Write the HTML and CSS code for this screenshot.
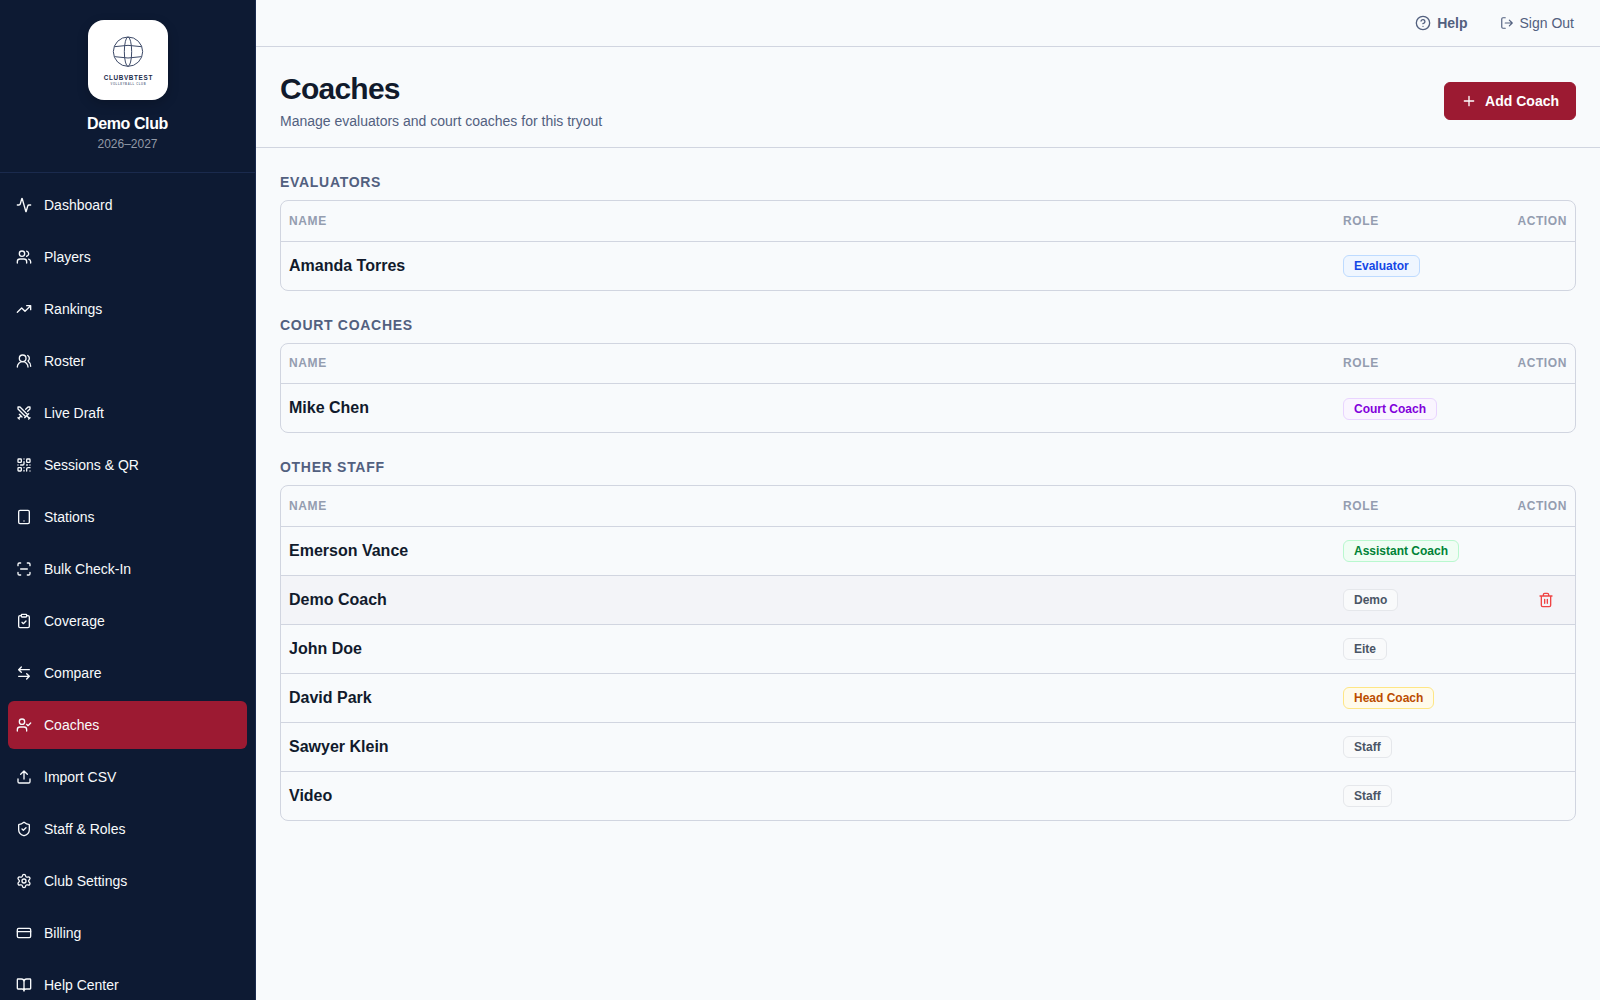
FILE: index.html
```
<!DOCTYPE html>
<html lang="en">
<head>
    <meta charset="UTF-8">
    <meta name="viewport" content="width=device-width, initial-scale=1.0">
    <title>Coaches - Demo Club</title>
    <link rel="stylesheet" href="styles.css">
</head>
<body>
    <aside class="sidebar">
        <div class="club">
            <svg class="club-logo" viewBox="0 0 240 240" role="img" aria-label="Club logo">
                <g fill="none" stroke="#3d4a68" stroke-width="3">
                    <circle cx="120" cy="95" r="44"/>
                    <ellipse cx="120" cy="95" rx="11" ry="44"/>
                    <path d="M80 80Q120 72 160 80M80 110Q120 118 160 110"/>
                </g>
                <text class="logo-name" x="121" y="180">CLUBVBTEST</text>
                <text class="logo-sub" x="121" y="195">VOLLEYBALL CLUB</text>
            </svg>
            <div class="club-name">Demo Club</div>
            <div class="club-season">2026–2027</div>
        </div>
        <nav class="nav">
            <a href="#"><svg class="icon" viewBox="0 0 24 24"><path d="M22 12h-2.48a2 2 0 0 0-1.93 1.46l-2.35 8.36a.25.25 0 0 1-.48 0L9.24 2.18a.25.25 0 0 0-.48 0l-2.35 8.36A2 2 0 0 1 4.49 12H2"/></svg>Dashboard</a>
            <a href="#"><svg class="icon" viewBox="0 0 24 24"><path d="M16 21v-2a4 4 0 0 0-4-4H6a4 4 0 0 0-4 4v2M16 3.128a4 4 0 0 1 0 7.744M22 21v-2a4 4 0 0 0-3-3.87"/><circle cx="9" cy="7" r="4"/></svg>Players</a>
            <a href="#"><svg class="icon" viewBox="0 0 24 24"><path d="M16 7h6v6M22 7l-8.500 8.500-5-5L2 17"/></svg>Rankings</a>
            <a href="#"><svg class="icon" viewBox="0 0 24 24"><path d="M18 21a8 8 0 0 0-16 0"/><circle cx="10" cy="8" r="5"/><path d="M22 20c0-3.370-2-6.500-4-8a5 5 0 0 0-.45-8.300"/></svg>Roster</a>
            <a href="#"><svg class="icon" viewBox="0 0 24 24"><path d="M14.500 17.500 3 6V3h3l11.500 11.500M13 19l6-6M16 16l4 4M19 21l2-2M14.500 6.500 18 3h3v3l-3.500 3.500M5 14l4 4M7 17l-3 3M3 19l2 2"/></svg>Live Draft</a>
            <a href="#"><svg class="icon" viewBox="0 0 24 24"><rect x="3" y="3" width="5" height="5" rx="1"/><rect x="16" y="3" width="5" height="5" rx="1"/><rect x="3" y="16" width="5" height="5" rx="1"/><path d="M21 16h-3a2 2 0 0 0-2 2v3M21 21v.01M12 7v3a2 2 0 0 1-2 2H7M3 12h.01M12 3h.01M12 16v.01M16 12h1M21 12v.01M12 21v-1"/></svg>Sessions &amp; QR</a>
            <a href="#"><svg class="icon" viewBox="0 0 24 24"><rect x="4" y="2" width="16" height="20" rx="2"/><path d="M12 18h.01"/></svg>Stations</a>
            <a href="#"><svg class="icon" viewBox="0 0 24 24"><path d="M3 7V5a2 2 0 0 1 2-2h2M17 3h2a2 2 0 0 1 2 2v2M21 17v2a2 2 0 0 1-2 2h-2M7 21H5a2 2 0 0 1-2-2v-2M7 12h10"/></svg>Bulk Check-In</a>
            <a href="#"><svg class="icon" viewBox="0 0 24 24"><rect x="8" y="2" width="8" height="4" rx="1"/><path d="M16 4h2a2 2 0 0 1 2 2v14a2 2 0 0 1-2 2H6a2 2 0 0 1-2-2V6a2 2 0 0 1 2-2h2M9 14l2 2 4-4"/></svg>Coverage</a>
            <a href="#"><svg class="icon" viewBox="0 0 24 24"><path d="M8 3 4 7l4 4M4 7h16M16 21l4-4-4-4M20 17H4"/></svg>Compare</a>
            <a href="#" class="active" aria-current="page"><svg class="icon" viewBox="0 0 24 24"><path d="M16 11l2 2 4-4M16 21v-2a4 4 0 0 0-4-4H6a4 4 0 0 0-4 4v2"/><circle cx="9" cy="7" r="4"/></svg>Coaches</a>
            <a href="#"><svg class="icon" viewBox="0 0 24 24"><path d="M12 3v12M17 8l-5-5-5 5M21 15v4a2 2 0 0 1-2 2H5a2 2 0 0 1-2-2v-4"/></svg>Import CSV</a>
            <a href="#"><svg class="icon" viewBox="0 0 24 24"><path d="M20 13c0 5-3.500 7.500-7.660 8.950a1 1 0 0 1-.67-.01C7.500 20.500 4 18 4 13V6a1 1 0 0 1 1-1c2 0 4.500-1.200 6.240-2.720a1.170 1.170 0 0 1 1.520 0C14.510 3.810 17 5 19 5a1 1 0 0 1 1 1zM9 12l2 2 4-4"/></svg>Staff &amp; Roles</a>
            <a href="#"><svg class="icon" viewBox="0 0 24 24"><path d="M9.671 4.136a2.34 2.34 0 0 1 4.659 0 2.34 2.34 0 0 0 3.319 1.915 2.34 2.34 0 0 1 2.330 4.033 2.34 2.34 0 0 0 0 3.831 2.34 2.34 0 0 1-2.330 4.033 2.34 2.34 0 0 0-3.319 1.915 2.34 2.34 0 0 1-4.659 0 2.34 2.34 0 0 0-3.320-1.915 2.34 2.34 0 0 1-2.330-4.033 2.34 2.34 0 0 0 0-3.831A2.34 2.34 0 0 1 6.350 6.051a2.34 2.34 0 0 0 3.319-1.915"/><circle cx="12" cy="12" r="3"/></svg>Club Settings</a>
            <a href="#"><svg class="icon" viewBox="0 0 24 24"><rect x="2" y="5" width="20" height="14" rx="2"/><path d="M2 10h20"/></svg>Billing</a>
            <a href="#"><svg class="icon" viewBox="0 0 24 24"><path d="M12 7v14M3 18a1 1 0 0 1-1-1V4a1 1 0 0 1 1-1h5a4 4 0 0 1 4 4 4 4 0 0 1 4-4h5a1 1 0 0 1 1 1v13a1 1 0 0 1-1 1h-6a3 3 0 0 0-3 3 3 3 0 0 0-3-3z"/></svg>Help Center</a>
        </nav>
    </aside>

    <div class="content">
        <div class="topbar">
            <a href="#" class="top-link help"><svg class="icon" viewBox="0 0 24 24"><circle cx="12" cy="12" r="10"/><path d="M9.090 9a3 3 0 0 1 5.830 1c0 2-3 3-3 3M12 17h.01"/></svg>Help</a>
            <button type="button" class="top-link"><svg class="icon icon-sm" viewBox="0 0 24 24"><path d="M16 17l5-5-5-5M21 12H9M9 21H5a2 2 0 0 1-2-2V5a2 2 0 0 1 2-2h4"/></svg>Sign Out</button>
        </div>

        <header class="page-header">
            <div>
                <h1>Coaches</h1>
                <p>Manage evaluators and court coaches for this tryout</p>
            </div>
            <button type="button" class="add-btn"><svg class="icon" viewBox="0 0 24 24"><path d="M5 12h14M12 5v14"/></svg>Add Coach</button>
        </header>

        <main class="groups">
            <section>
                <h2>Evaluators</h2>
                <div class="card">
                    <table>
                        <thead>
                            <tr><th>Name</th><th class="role">Role</th><th class="action">Action</th></tr>
                        </thead>
                        <tbody>
                            <tr><td>Amanda Torres</td><td><span class="badge blue">Evaluator</span></td><td></td></tr>
                        </tbody>
                    </table>
                </div>
            </section>

            <section>
                <h2>Court Coaches</h2>
                <div class="card">
                    <table>
                        <thead>
                            <tr><th>Name</th><th class="role">Role</th><th class="action">Action</th></tr>
                        </thead>
                        <tbody>
                            <tr><td>Mike Chen</td><td><span class="badge purple">Court Coach</span></td><td></td></tr>
                        </tbody>
                    </table>
                </div>
            </section>

            <section>
                <h2>Other Staff</h2>
                <div class="card">
                    <table>
                        <thead>
                            <tr><th>Name</th><th class="role">Role</th><th class="action">Action</th></tr>
                        </thead>
                        <tbody>
                            <tr><td>Emerson Vance</td><td><span class="badge green">Assistant Coach</span></td><td></td></tr>
                            <tr class="selected">
                                <td>Demo Coach</td>
                                <td><span class="badge">Demo</span></td>
                                <td class="action"><button type="button" class="delete-btn" aria-label="Remove Demo Coach"><svg class="icon" viewBox="0 0 24 24"><path d="M3 6h18M19 6v14a2 2 0 0 1-2 2H7a2 2 0 0 1-2-2V6M8 6V4a2 2 0 0 1 2-2h4a2 2 0 0 1 2 2v2M10 11v6M14 11v6"/></svg></button></td>
                            </tr>
                            <tr><td>John Doe</td><td><span class="badge">Eite</span></td><td></td></tr>
                            <tr><td>David Park</td><td><span class="badge amber">Head Coach</span></td><td></td></tr>
                            <tr><td>Sawyer Klein</td><td><span class="badge">Staff</span></td><td></td></tr>
                            <tr><td>Video</td><td><span class="badge">Staff</span></td><td></td></tr>
                        </tbody>
                    </table>
                </div>
            </section>
        </main>
    </div>
</body>
</html>
```
FILE: styles.css
```
* {
    box-sizing: border-box;
}

body {
    margin: 0;
    display: flex;
    height: 100vh;
    overflow: hidden;
    font-family: "Liberation Sans", Arial, sans-serif;
    font-size: 14px;
    line-height: 20px;
    color: #111a2c;
    background-color: #f8fafc;
}

h1, h2, p {
    margin: 0;
}

a {
    color: inherit;
    text-decoration: none;
}

button {
    font: inherit;
    cursor: pointer;
}

.icon {
    width: 16px;
    height: 16px;
    flex-shrink: 0;
    fill: none;
    stroke: currentColor;
    stroke-width: 2;
    stroke-linecap: round;
    stroke-linejoin: round;
}

.icon-sm {
    width: 14px;
    height: 14px;
}

/* Sidebar */
.sidebar {
    width: 256px;
    flex-shrink: 0;
    overflow: hidden;
    background-color: #0d1a33;
    border-right: 1px solid #1a2a4d;
    color: #f8fafc;
}

.club {
    padding: 20px 0;
    text-align: center;
    border-bottom: 1px solid #1a2a4d;
}

.club-logo {
    display: block;
    width: 80px;
    height: 80px;
    margin: 0 auto 12px;
    background-color: #fff;
    border-radius: 16px;
    box-shadow: 0 4px 12px rgba(0, 0, 0, 0.2);
}

.logo-name {
    font-size: 19px;
    font-weight: bold;
    letter-spacing: 2px;
    text-anchor: middle;
    fill: #1b2a4a;
}

.logo-sub {
    font-size: 8px;
    font-weight: bold;
    letter-spacing: 2px;
    text-anchor: middle;
    fill: #6b7690;
}

.club-name {
    font-size: 16px;
    font-weight: bold;
    line-height: 24px;
    letter-spacing: -0.025em;
    color: #fff;
}

.club-season {
    font-size: 12px;
    line-height: 16px;
    color: #9299a6;
}

.nav {
    display: flex;
    flex-direction: column;
    gap: 4px;
    padding: 8px;
}

.nav a {
    display: flex;
    align-items: center;
    gap: 12px;
    padding: 14px 8px;
    border-radius: 6px;
}

.nav a.active {
    background-color: #9c1a32;
}

/* Main area */
.content {
    flex: 1;
    min-width: 0;
    overflow: auto;
}

.topbar {
    display: flex;
    justify-content: flex-end;
    gap: 12px;
    padding: 8px 16px;
    border-bottom: 1px solid #d1d5e0;
}

.top-link {
    display: flex;
    align-items: center;
    gap: 6px;
    padding: 5px 10px;
    border: 0;
    background: none;
    color: #52607f;
}

.top-link.help {
    font-weight: bold;
}

.page-header {
    display: flex;
    align-items: center;
    justify-content: space-between;
    padding: 24px 24px 16px;
    border-bottom: 1px solid #d1d5e0;
}

.page-header h1 {
    font-size: 30px;
    line-height: 36px;
    letter-spacing: -0.025em;
}

.page-header p {
    margin-top: 4px;
    color: #52607f;
}

.add-btn {
    display: flex;
    align-items: center;
    gap: 8px;
    padding: 8px 16px;
    border: 1px solid #9c1a32;
    border-radius: 6px;
    background-color: #9c1a32;
    color: #fff;
    font-weight: bold;
}

.groups {
    display: flex;
    flex-direction: column;
    gap: 24px;
    padding: 24px;
}

.groups h2 {
    margin-bottom: 8px;
    font-size: 14px;
    letter-spacing: 0.05em;
    text-transform: uppercase;
    color: #52607f;
}

.card {
    overflow: hidden;
    border: 1px solid #d1d5e0;
    border-radius: 8px;
}

table {
    width: 100%;
    border-collapse: collapse;
    table-layout: fixed;
}

tr {
    border-bottom: 1px solid #d1d5e0;
}

tbody tr:last-child {
    border-bottom: 0;
}

th, td {
    text-align: left;
}

th {
    height: 40px;
    padding: 0 8px;
    font-size: 12px;
    letter-spacing: 0.05em;
    text-transform: uppercase;
    color: #949db0;
}

td {
    padding: 12px 8px;
    font-size: 16px;
    font-weight: bold;
    line-height: 24px;
}

th.role {
    width: 160px;
}

th.action {
    width: 80px;
}

.action {
    text-align: right;
}

td.action {
    padding: 8px;
}

tr.selected {
    background-color: #f3f4f8;
}

.badge {
    display: inline-block;
    vertical-align: middle;
    padding: 2px 10px;
    border: 1px solid #e5e7eb;
    border-radius: 6px;
    background-color: #f9fafb;
    color: #4a5565;
    font-size: 12px;
    line-height: 16px;
}

.badge.blue {
    border-color: #bedbff;
    background-color: #eff6ff;
    color: #1447e6;
}

.badge.purple {
    border-color: #e9d4ff;
    background-color: #faf5ff;
    color: #8200db;
}

.badge.green {
    border-color: #b9f8cf;
    background-color: #f0fdf4;
    color: #008236;
}

.badge.amber {
    border-color: #fee685;
    background-color: #fffbeb;
    color: #bb4d00;
}

.delete-btn {
    display: flex;
    align-items: center;
    height: 32px;
    margin-left: auto;
    padding: 0 12px;
    border: 1px solid transparent;
    border-radius: 6px;
    background: none;
    color: #ef4444;
}
```
